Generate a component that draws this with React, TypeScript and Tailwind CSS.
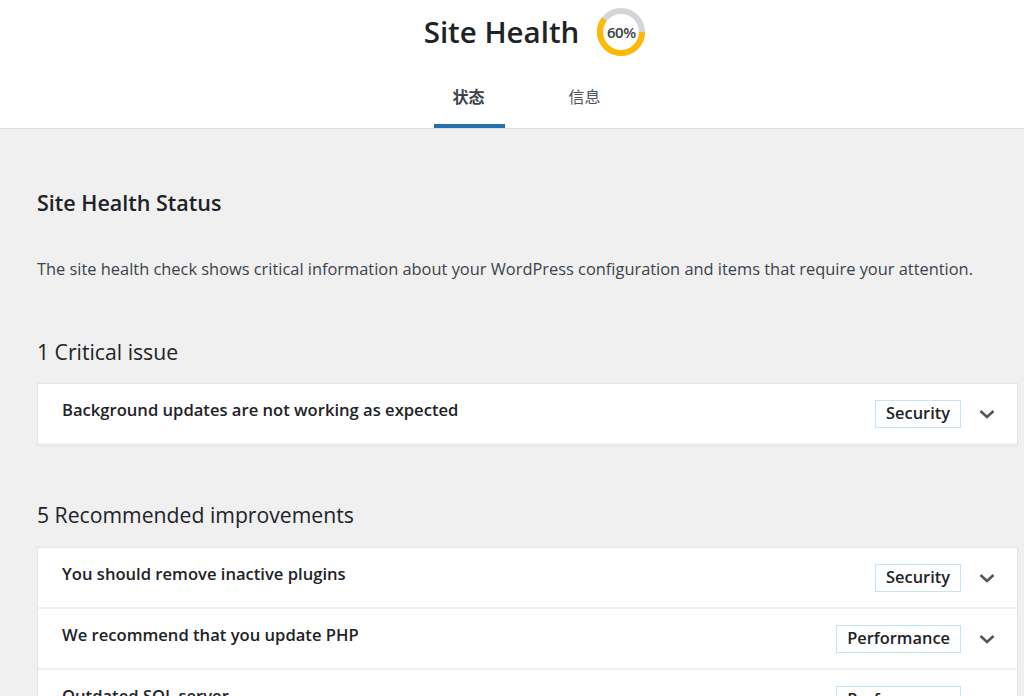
import React from "react";

const font = { fontFamily: '"Open Sans", "Noto Sans CJK SC", sans-serif' };

function Ring() {
  const r = 21;
  const c = 2 * Math.PI * r;
  return (
    <div className="relative w-[50px] h-[50px]">
      <svg width="50" height="50" viewBox="0 0 50 50" className="absolute inset-0">
        <circle cx="25" cy="25" r={r} fill="none" stroke="#d5d5d7" strokeWidth="6" />
        <circle
          cx="25"
          cy="25"
          r={r}
          fill="none"
          stroke="#ffb900"
          strokeWidth="6"
          strokeDasharray={`${c * 0.6} ${c}`}
        />
      </svg>
      <div className="absolute inset-0 flex items-center justify-center text-[15px] font-semibold text-[#3c434a] tracking-[-0.4px]">
        60%
      </div>
    </div>
  );
}

function Chevron() {
  return (
    <svg width="20" height="20" viewBox="0 0 20 20">
      <path d="M3.5 7 L10 13 L16.5 7" fill="none" stroke="#50575e" strokeWidth="2.6" />
    </svg>
  );
}

function Item({ title, badge }: { title: string; badge: string }) {
  return (
    <div className="flex items-center h-[61px] bg-white border-b-2 border-[#f0f0f1] pl-[24px] pr-[20px]">
      <div className="flex-1 text-[16.6px] font-semibold text-[#1d2327] -mt-[6px]">{title}</div>
      <span className="border border-[#c5e3f5] px-[10px] h-[28px] flex items-center text-[16.4px] font-semibold text-[#1d2327]">
        {badge}
      </span>
      <div className="ml-[16px] w-[20px] flex justify-center">
        <Chevron />
      </div>
    </div>
  );
}

export default function App() {
  return (
    <div className="w-[1024px] h-[696px] overflow-hidden bg-[#f0f0f1]" style={font}>
      <div className="bg-white border-b border-[#dcdcde] h-[129px] flex flex-col items-center">
        <div className="flex items-center gap-[17px] mt-[7px] ml-[46px]">
          <h1 className="text-[29.5px] font-semibold text-[#1d2327] leading-[50px]">Site Health</h1>
          <Ring />
        </div>
        <div className="flex mt-[22px] ml-[31px] gap-[45px]">
          <div className="w-[71px] h-[49px] flex flex-col items-center justify-between">
            <span className="text-[16px] font-semibold text-[#3c434a] mt-[6px] leading-[24px] -translate-x-[1px]">状态</span>
            <div className="w-full h-[4px] bg-[#2271b1]"></div>
          </div>
          <div className="w-[71px] h-[49px] flex flex-col items-center">
            <span className="text-[16px] text-[#50575e] mt-[6px] leading-[24px] -translate-x-[1px]">信息</span>
          </div>
        </div>
      </div>
      <div className="pl-[37px] pr-[6px]">
        <h2 className="text-[21.5px] font-semibold text-[#1d2327] mt-[60px] leading-[28px]">Site Health Status</h2>
        <p className="text-[16.4px] text-[#3c434a] mt-[40px] leading-[24px] whitespace-nowrap">
          The site health check shows critical information about your WordPress configuration and items that require your attention.
        </p>
        <h3 className="text-[21.2px] text-[#1d2327] mt-[56px] leading-[30px]">1 Critical issue</h3>
        <div className="mt-[16px] border border-[#e2e4e7]">
          <Item title="Background updates are not working as expected" badge="Security" />
        </div>
        <h3 className="text-[21.2px] text-[#1d2327] mt-[54px] leading-[30px]">5 Recommended improvements</h3>
        <div className="mt-[17px] border border-[#e2e4e7]">
          <Item title="You should remove inactive plugins" badge="Security" />
          <Item title="We recommend that you update PHP" badge="Performance" />
          <Item title="Outdated SQL server" badge="Performance" />
          <Item title="One or more recommended modules are missing" badge="Performance" />
          <Item title="Your site does not have any active caching" badge="Performance" />
        </div>
      </div>
    </div>
  );
}
